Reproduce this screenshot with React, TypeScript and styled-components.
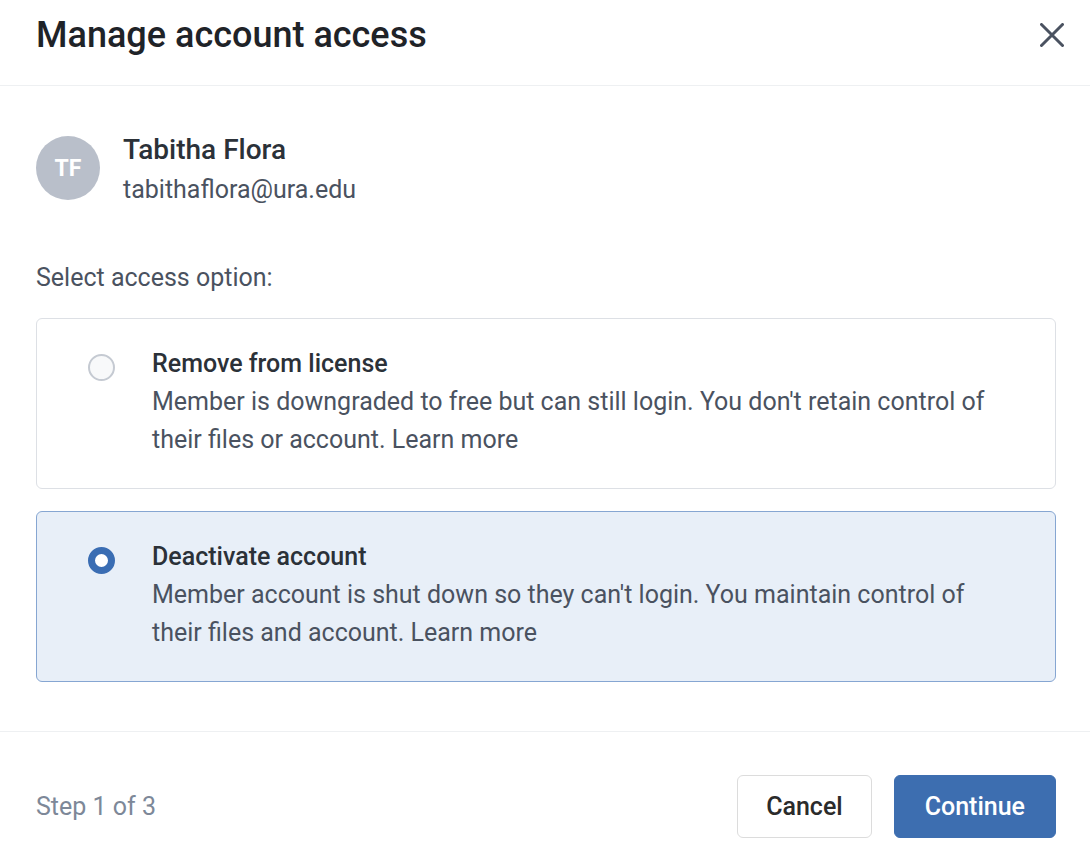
import { useState } from 'react';
import styled, { createGlobalStyle } from 'styled-components';

const GlobalStyle = createGlobalStyle`
    html, body {
        margin: 0;
        padding: 0;
        background: #ffffff;
        font-family: Roboto, "Noto Sans", "Liberation Sans", sans-serif;
    }
    * {
        box-sizing: border-box;
    }
`

const Dialog = styled.div`
    width: 1090px;
    height: 866px;
    display: flex;
    flex-direction: column;
    background: #ffffff;
`

const Header = styled.div`
    height: 86px;
    display: flex;
    justify-content: space-between;
    align-items: flex-start;
    padding: 14px 26px 0 36px;
    border-bottom: 1px solid #eef0f2;
`

const Title = styled.h1`
    margin: 0;
    font-size: 36px;
    line-height: 42px;
    font-weight: 500;
    color: #1f2328;
`

const CloseButton = styled.button`
    width: 24px;
    height: 24px;
    margin-top: 9px;
    padding: 0;
    border: none;
    background: none;
    cursor: pointer;
    display: flex;
`

const Body = styled.div`
    flex: 1;
    padding: 50px 34px 0 36px;
    display: flex;
    flex-direction: column;
`

const UserRow = styled.div`
    display: flex;
    align-items: flex-start;
    gap: 23px;
`

const Avatar = styled.div`
    width: 64px;
    height: 64px;
    border-radius: 50%;
    background: #b9bfca;
    color: #ffffff;
    font-size: 23px;
    font-weight: 700;
    display: flex;
    align-items: center;
    justify-content: center;
`

const UserInfo = styled.div`
    margin-top: -4px;
`

const UserName = styled.div`
    font-size: 28px;
    line-height: 36px;
    font-weight: 500;
    color: #2b3138;
`

const UserEmail = styled.div`
    margin-top: 4px;
    font-size: 25px;
    line-height: 36px;
    color: #4a5260;
`

const SectionLabel = styled.div`
    margin-top: 55px;
    font-size: 25px;
    line-height: 30px;
    color: #4a5260;
`

const Options = styled.div`
    margin-top: 25px;
    display: flex;
    flex-direction: column;
    gap: 22px;
`

const OptionCard = styled.label<{ $selected: boolean }>`
    display: flex;
    align-items: flex-start;
    gap: 37px;
    padding: 26px 50px 29px 51px;
    border-radius: 6px;
    border: 1px solid ${({ $selected }) => ($selected ? '#86a6d2' : '#dde0e5')};
    background: ${({ $selected }) => ($selected ? '#e8eff8' : '#ffffff')};
    cursor: pointer;
`

const Radio = styled.span<{ $checked: boolean }>`
    flex: none;
    width: 27px;
    height: 27px;
    margin-top: 9px;
    border-radius: 50%;
    border: ${({ $checked }) => ($checked ? '7px solid #3a6db3' : '2.5px solid #c5cad2')};
    background: ${({ $checked }) => ($checked ? '#ffffff' : '#f8f9fa')};
`

const OptionTitle = styled.div`
    font-size: 25px;
    line-height: 38px;
    font-weight: 500;
    color: #2b3138;
`

const OptionText = styled.div`
    font-size: 25px;
    line-height: 38px;
    color: #4a5260;
`

const Footer = styled.div`
    height: 135px;
    border-top: 1px solid #eef0f2;
    display: flex;
    align-items: flex-start;
    justify-content: space-between;
    padding: 43px 34px 0 36px;
`

const StepText = styled.div`
    font-size: 25px;
    line-height: 63px;
    color: #7d8898;
`

const Actions = styled.div`
    display: flex;
    gap: 22px;
`

const Button = styled.button<{ $primary?: boolean }>`
    height: 63px;
    padding: 0 ${({ $primary }) => ($primary ? '30px' : '28px')};
    border-radius: 6px;
    font-family: inherit;
    font-size: 25px;
    font-weight: 500;
    cursor: pointer;
    border: 1px solid ${({ $primary }) => ($primary ? '#3d6eb0' : '#dcdcdc')};
    background: ${({ $primary }) => ($primary ? '#3d6eb0' : '#ffffff')};
    color: ${({ $primary }) => ($primary ? '#ffffff' : '#2b2b2b')};
`

const options = [
    {
        id: 'remove',
        title: 'Remove from license',
        text: "Member is downgraded to free but can still login. You don't retain control of their files or account. Learn more",
    },
    {
        id: 'deactivate',
        title: 'Deactivate account',
        text: "Member account is shut down so they can't login. You maintain control of their files and account. Learn more",
    },
];

export default function App() {
    const [selected, setSelected] = useState('deactivate');

    return (
        <>
            <GlobalStyle />
            <Dialog>
                <Header>
                    <Title>Manage account access</Title>
                    <CloseButton aria-label="Close">
                        <svg width="24" height="24" viewBox="0 0 24 24">
                            <path d="M1.5 1.5L22.5 22.5M22.5 1.5L1.5 22.5" stroke="#4a5260" strokeWidth="3" strokeLinecap="round" />
                        </svg>
                    </CloseButton>
                </Header>
                <Body>
                    <UserRow>
                        <Avatar>TF</Avatar>
                        <UserInfo>
                            <UserName>Tabitha Flora</UserName>
                            <UserEmail>tabithaflora@ura.edu</UserEmail>
                        </UserInfo>
                    </UserRow>
                    <SectionLabel>Select access option:</SectionLabel>
                    <Options>
                        {options.map((opt) => (
                            <OptionCard key={opt.id} $selected={selected === opt.id} onClick={() => setSelected(opt.id)}>
                                <Radio $checked={selected === opt.id} />
                                <div>
                                    <OptionTitle>{opt.title}</OptionTitle>
                                    <OptionText>{opt.text}</OptionText>
                                </div>
                            </OptionCard>
                        ))}
                    </Options>
                </Body>
                <Footer>
                    <StepText>Step 1 of 3</StepText>
                    <Actions>
                        <Button>Cancel</Button>
                        <Button $primary>Continue</Button>
                    </Actions>
                </Footer>
            </Dialog>
        </>
    );
}
